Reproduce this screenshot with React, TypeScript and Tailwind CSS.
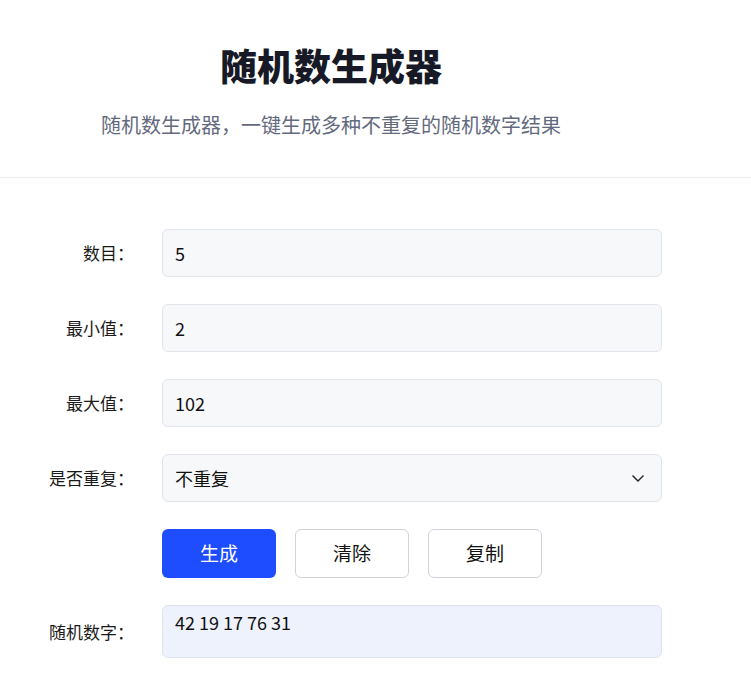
import React from "react";

const font = { fontFamily: '"Noto Sans CJK SC", "Noto Sans", sans-serif' };

function Row({ label, children }: { label: string; children: React.ReactNode }) {
  return (
    <div className="flex items-center">
      <div className="w-[134px] shrink-0 text-right text-[17px] text-[#1a1a1a]">{label}</div>
      <div className="ml-[28px] w-[500px]">{children}</div>
    </div>
  );
}

export default function App() {
  return (
    <div className="min-h-[688px] bg-white" style={font}>
      <div className="border-b border-[#ececec] h-[178px]">
        <div className="w-[662px] flex flex-col items-center">
          <h1 className="mt-[41px] text-[37px] leading-[48px] font-black text-[#171a26]">随机数生成器</h1>
          <p className="mt-[22px] text-[20px] leading-[28px] text-[#646a7d]">随机数生成器，一键生成多种不重复的随机数字结果</p>
        </div>
      </div>
      <div className="pt-[51px] flex flex-col gap-[27px]">
        <Row label="数目：">
          <div className="h-[48px] rounded-[6px] border border-[#e1e4ea] bg-[#f6f8fa] px-[12px] flex items-center text-[18px] text-[#111]">5</div>
        </Row>
        <Row label="最小值：">
          <div className="h-[48px] rounded-[6px] border border-[#e1e4ea] bg-[#f6f8fa] px-[12px] flex items-center text-[18px] text-[#111]">2</div>
        </Row>
        <Row label="最大值：">
          <div className="h-[48px] rounded-[6px] border border-[#e1e4ea] bg-[#f6f8fa] px-[12px] flex items-center text-[18px] text-[#111]">102</div>
        </Row>
        <Row label="是否重复：">
          <div className="h-[48px] rounded-[6px] border border-[#e1e4ea] bg-[#f6f8fa] pl-[12px] pr-[16px] flex items-center justify-between text-[18px] text-[#111]">
            <span>不重复</span>
            <svg width="14" height="9" viewBox="0 0 14 9" fill="none">
              <path d="M1.5 1.5 L7 7 L12.5 1.5" stroke="#222" strokeWidth="1.4" />
            </svg>
          </div>
        </Row>
        <div className="flex pl-[162px] gap-[19px]">
          <button className="w-[114px] h-[49px] rounded-[6px] bg-[#1e4dff] text-white text-[19px]">生成</button>
          <button className="w-[114px] h-[49px] rounded-[6px] border border-[#d0d3d9] bg-white text-[#111] text-[19px]">清除</button>
          <button className="w-[114px] h-[49px] rounded-[6px] border border-[#d0d3d9] bg-white text-[#111] text-[19px]">复制</button>
        </div>
        <Row label="随机数字：">
          <div className="h-[53px] rounded-[6px] border border-[#dde3f0] bg-[#eef2fd] px-[12px] pt-[3px] text-[18px] leading-[26px] text-[#111]">42 19 17 76 31</div>
        </Row>
      </div>
    </div>
  );
}
